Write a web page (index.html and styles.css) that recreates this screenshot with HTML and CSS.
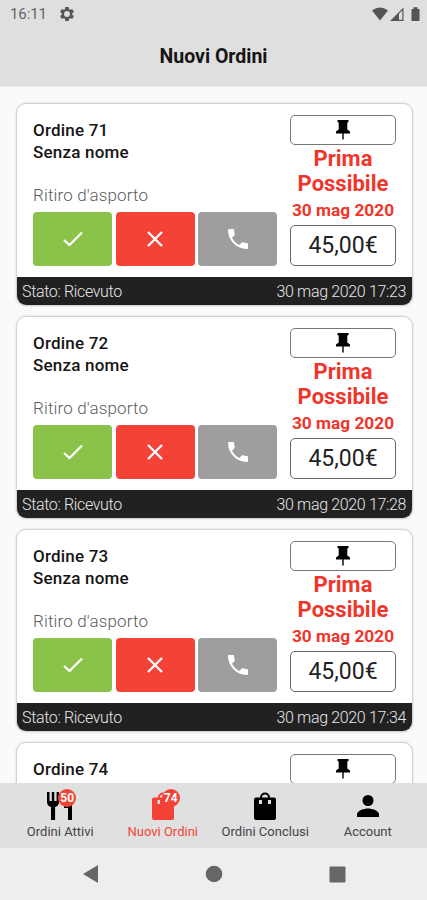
FILE: index.html
```
<!DOCTYPE html>
<html lang="it">
<head>
<meta charset="utf-8">
<title>Nuovi Ordini</title>
<link rel="stylesheet" href="styles.css">
</head>
<body>
<svg width="0" height="0" class="defs">
  <symbol id="pin" viewBox="0 0 14 20"><path d="M1.500 0h11v2l-1.200.6v7l2.700 2V13.500H7.700V19.500H6.300V13.500H0V11.600l2.700-2v-7L1.500 2z"/></symbol>
  <symbol id="check" viewBox="0 0 20 16"><path d="M1 9l5.500 5L19 1.500" fill="none" stroke="#fff" stroke-width="2.300"/></symbol>
  <symbol id="cross" viewBox="0 0 16 16"><path d="M1 1l14 14M15 1L1 15" fill="none" stroke="#fff" stroke-width="2.300"/></symbol>
  <symbol id="phone" viewBox="3 3 18 18"><path fill="#fff" d="M6.62 10.79c1.44 2.83 3.76 5.14 6.59 6.59l2.2-2.2c.27-.27.67-.36 1.02-.24 1.12.37 2.33.57 3.57.57.55 0 1 .45 1 1V20c0 .55-.45 1-1 1-9.39 0-17-7.61-17-17 0-.55.45-1 1-1h3.5c.55 0 1 .45 1 1 0 1.25.2 2.45.57 3.57.11.35.03.74-.25 1.02z"/></symbol>
</svg>
<div class="screen">
  <header>
    <div class="status">
      <span class="clock">16:11</span>
      <svg class="gear" viewBox="2 2 20 20"><path fill="#555" fill-rule="evenodd" d="M19.43 12.98c.04-.32.07-.64.07-.98s-.03-.66-.07-.98l2.11-1.65c.19-.15.24-.42.12-.64l-2-3.46c-.12-.22-.39-.3-.61-.22l-2.49 1c-.52-.4-1.08-.73-1.69-.98l-.38-2.65C14.46 2.18 14.25 2 14 2h-4c-.25 0-.46.18-.49.42l-.38 2.65c-.61.25-1.17.59-1.69.98l-2.49-1c-.23-.09-.49 0-.61.22l-2 3.46c-.13.22-.07.49.12.64l2.11 1.65c-.04.32-.07.65-.07.98s.03.66.07.98l-2.11 1.65c-.19.15-.24.42-.12.64l2 3.46c.12.22.39.3.61.22l2.49-1c.52.4 1.08.73 1.69.98l.38 2.65c.03.24.24.42.49.42h4c.25 0 .46-.18.49-.42l.38-2.65c.61-.25 1.17-.59 1.69-.98l2.49 1c.23.09.49 0 .61-.22l2-3.46c.12-.22.07-.49-.12-.64zM12 16.2a4.2 4.2 0 1 1 0-8.4 4.2 4.2 0 0 1 0 8.4z"/></svg>
      <svg class="signals" viewBox="0 0 48 15"><g fill="#555"><path d="M0 3.5Q8 -2.5 16 3.5L8 13.5z"/><path fill-rule="evenodd" d="M18 14L31.5.5V14zM27 6.800V12.800h3.300V3.500z"/><path d="M39.500 2h2V.3h4V2h2v12h-8z"/></g></svg>
    </div>
    <h1>Nuovi Ordini</h1>
  </header>
  <main>
    <article class="card">
      <div class="body">
        <div class="info"><p class="name">Ordine 71</p><p class="name">Senza nome</p><p class="kind">Ritiro d'asporto</p>
          <div class="actions"><button class="ok"><svg width="20" height="16"><use href="#check"/></svg></button><button class="no"><svg width="16" height="16"><use href="#cross"/></svg></button><button class="call"><svg width="20" height="20"><use href="#phone"/></svg></button></div></div>
        <div class="side"><div class="pin"><svg width="14" height="20"><use href="#pin"/></svg></div><p class="when">Prima Possibile</p><p class="date">30 mag 2020</p><div class="price">45,00€</div></div>
      </div>
      <footer><span>Stato: Ricevuto</span><span>30 mag 2020 17:23</span></footer>
    </article>
    <article class="card">
      <div class="body">
        <div class="info"><p class="name">Ordine 72</p><p class="name">Senza nome</p><p class="kind">Ritiro d'asporto</p>
          <div class="actions"><button class="ok"><svg width="20" height="16"><use href="#check"/></svg></button><button class="no"><svg width="16" height="16"><use href="#cross"/></svg></button><button class="call"><svg width="20" height="20"><use href="#phone"/></svg></button></div></div>
        <div class="side"><div class="pin"><svg width="14" height="20"><use href="#pin"/></svg></div><p class="when">Prima Possibile</p><p class="date">30 mag 2020</p><div class="price">45,00€</div></div>
      </div>
      <footer><span>Stato: Ricevuto</span><span>30 mag 2020 17:28</span></footer>
    </article>
    <article class="card">
      <div class="body">
        <div class="info"><p class="name">Ordine 73</p><p class="name">Senza nome</p><p class="kind">Ritiro d'asporto</p>
          <div class="actions"><button class="ok"><svg width="20" height="16"><use href="#check"/></svg></button><button class="no"><svg width="16" height="16"><use href="#cross"/></svg></button><button class="call"><svg width="20" height="20"><use href="#phone"/></svg></button></div></div>
        <div class="side"><div class="pin"><svg width="14" height="20"><use href="#pin"/></svg></div><p class="when">Prima Possibile</p><p class="date">30 mag 2020</p><div class="price">45,00€</div></div>
      </div>
      <footer><span>Stato: Ricevuto</span><span>30 mag 2020 17:34</span></footer>
    </article>
    <article class="card">
      <div class="body">
        <div class="info"><p class="name">Ordine 74</p></div>
        <div class="side"><div class="pin"><svg width="14" height="20"><use href="#pin"/></svg></div></div>
      </div>
    </article>
  </main>
  <nav class="tabs">
    <a class="tab"><span class="icon"><svg width="26" height="28" viewBox="0 0 26 28"><path d="M0 0h2.500v9h2.300V0h2.500v9h2.300V0H12v10q0 4-3.900 5v13H4V15Q0 14 0 10zM25 0v28h-4V16h-4V7q0-6 8-7z"/></svg><b class="badge">50</b></span><span class="label">Ordini Attivi</span></a>
    <a class="tab active"><span class="icon"><svg width="22" height="28" viewBox="0 0 22 28"><path fill-rule="evenodd" d="M2 5.500h4a5 5 0 0 1 10 0h4q2 0 2 2V26q0 2-2 2H2q-2 0-2-2V7.500q0-2 2-2zM8 5.500h6a3 3 0 0 0-6 0zM5.500 8v4h2.500V8zM14 8v4h2.500V8z"/></svg><b class="badge">74</b></span><span class="label">Nuovi Ordini</span></a>
    <a class="tab"><span class="icon"><svg width="22" height="28" viewBox="0 0 22 28"><path fill-rule="evenodd" d="M2 5.500h4a5 5 0 0 1 10 0h4q2 0 2 2V26q0 2-2 2H2q-2 0-2-2V7.500q0-2 2-2zM8 5.500h6a3 3 0 0 0-6 0zM5 8v4h3V8zM14 8v4h3V8z"/></svg></span><span class="label">Ordini Conclusi</span></a>
    <a class="tab"><span class="icon"><svg width="22" height="28" viewBox="0 0 22 28"><circle cx="11" cy="8.500" r="5.500"/><path d="M0 25v-2.500C0 18.500 7 16.500 11 16.500s11 2 11 6V25z"/></svg></span><span class="label">Account</span></a>
  </nav>
  <div class="system">
    <svg width="17" height="20" viewBox="0 0 17 20"><path d="M16 1v18L1 10z"/></svg>
    <svg width="18" height="18" viewBox="0 0 18 18"><circle cx="9" cy="9" r="8.300"/></svg>
    <svg width="17" height="17" viewBox="0 0 17 17"><rect x=".5" y=".5" width="16" height="16" rx="1"/></svg>
  </div>
</div>
</body>
</html>
```
FILE: styles.css
```
* { box-sizing: border-box; }
body { margin: 0; font-family: Roboto, "Liberation Sans", sans-serif; background: #fafafa; color: #151515; }
p, h1 { margin: 0; }
svg { display: block; flex: none; }
.defs { position: absolute; }
.screen { height: 900px; display: flex; flex-direction: column; overflow: hidden; }
header { height: 87px; flex: none; background: #dfdfdf; border-bottom: 1px solid #e8e8e8; }
.status { height: 28px; padding: 0 7px 0 10px; display: flex; align-items: center; }
.clock { font-size: 15px; color: #666; letter-spacing: -.1px; width: 50px; }
.gear { width: 14px; height: 14px; }
.signals { width: 48px; height: 15px; margin-left: auto; }
h1 { font-size: 19.500px; line-height: 24px; margin-top: 17px; text-align: center; font-weight: 700; }
main { flex: 1; min-height: 0; overflow: hidden; padding: 16px 14px 0 16px; }
.card { height: 203px; margin-bottom: 10px; background: #fff; border: 1px solid #d4d4d4; border-radius: 10px; overflow: hidden; box-shadow: 0 0 2px #ccc; }
.body { height: 173px; display: flex; justify-content: space-between; padding: 11px 16px 0; }
.info { width: 244px; padding-top: 4px; }
.name { font-size: 17px; line-height: 21.500px; font-weight: 500; letter-spacing: .2px; }
.name:first-child { margin-top: 1px; }
.kind { font-size: 17px; line-height: 22px; margin-top: 21px; font-weight: 300; color: #5c5c5c; letter-spacing: .15px; }
.actions { display: grid; grid-template-columns: repeat(3, 1fr); gap: 3.500px; margin-top: 6px; }
.actions button { height: 54px; border: 0; border-radius: 4px; padding: 0; display: flex; align-items: center; justify-content: center; }
.ok { background: #8bc34a; }
.no { background: #f44336; }
.call { background: #9e9e9e; }
.side { width: 106px; text-align: center; color: #f0352b; }
.pin { height: 30px; border: 1px solid #777; border-radius: 5px; display: flex; align-items: center; justify-content: center; color: #111; }
.when { font-size: 22px; line-height: 25px; font-weight: 700; margin-top: 1px; }
.date { font-size: 17.300px; line-height: 28px; font-weight: 700; white-space: nowrap; }
.price { height: 41px; margin-top: 1px; border: 1px solid #666; border-radius: 5px; color: #222; font-size: 23px; line-height: 40px; }
.card footer { height: 28px; background: #212121; color: #e6e6e6; font-weight: 300; font-size: 16px; letter-spacing: -.35px; line-height: 30px; padding: 0 6px 0 5px; display: flex; justify-content: space-between; }
.tabs { height: 65px; flex: none; background: #e0e0e0; padding: 9px 8px 0 9px; display: grid; grid-template-columns: repeat(4, 1fr); }
.tab { display: flex; flex-direction: column; align-items: center; color: #000; }
.active { color: #f44336; }
.tab svg { fill: currentColor; }
.icon { position: relative; height: 28px; }
.label { font-size: 13px; line-height: 18px; margin-top: 3px; white-space: nowrap; color: #444; }
.active .label { color: #f44336; }
.badge { position: absolute; left: 11px; top: -3px; width: 18px; height: 18px; border-radius: 50%; background: #f44336; color: #fff; font-size: 12px; line-height: 18px; text-align: center; }
.active .badge { left: 10px; }
.system { height: 52px; flex: none; background: #eee; display: flex; align-items: center; justify-content: space-between; padding: 0 81.500px; fill: #666; }
```
